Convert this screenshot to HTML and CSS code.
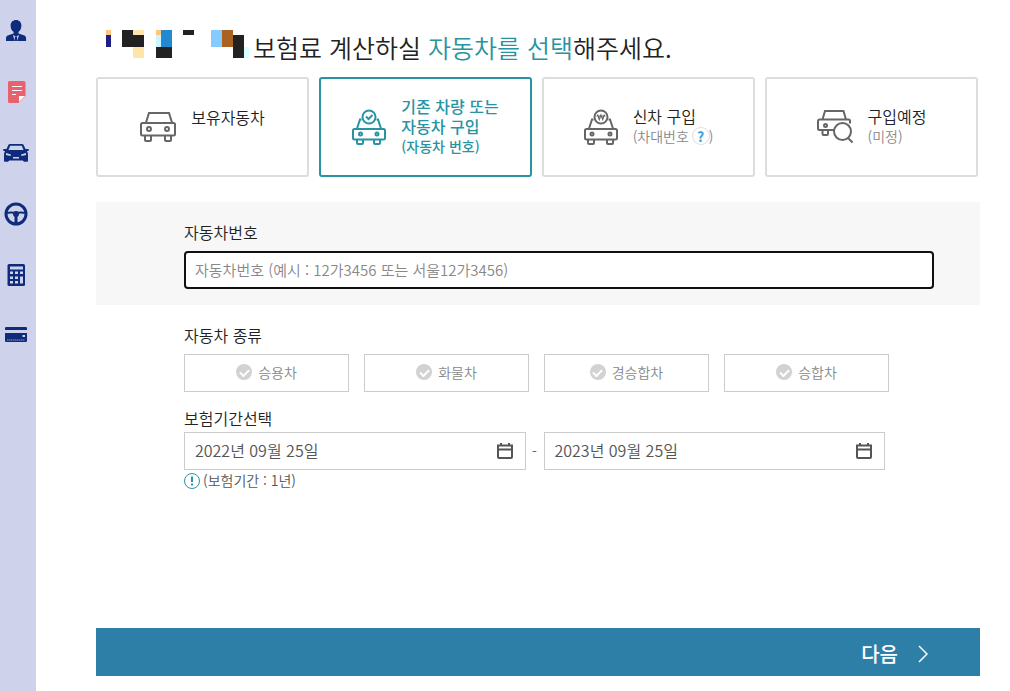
FILE: index.html
```html
<!DOCTYPE html>
<html lang="ko">
<head>
  <meta charset="UTF-8">
  <meta name="viewport" content="width=device-width, initial-scale=1">
  <title>보험료 계산</title>
  <link rel="stylesheet" href="styles.css">
</head>
<body>

  <nav class="sidebar">
    <a href="#" aria-label="가입자">
      <svg width="24" height="24" viewBox="0 0 24 24" fill="#0f2c7c">
        <path d="M12 1c3.300 0 5.400 2.300 5.400 5.600 0 3-1.200 5.200-2.900 6.400v1.500l6 2c1.100.5 1.600 1.500 1.600 3V22H2v-2.500c0-1.500.5-2.500 1.600-3l6-2V13C7.800 11.800 6.600 9.600 6.600 6.600 6.600 3.300 8.700 1 12 1z"/>
        <path d="M9 16l3 1.500 3-1.500-1.600 6h-2.800z" fill="#ced3eb"/>
        <path d="M11 17.500h2l.6 4.500h-3.200z"/>
      </svg>
    </a>
    <a href="#" aria-label="계약">
      <svg width="24" height="24" viewBox="0 0 24 24">
        <path d="M5.500 1h14.500a1.500 1.500 0 0 1 1.500 1.500V16l-7 7h-9A1.500 1.500 0 0 1 4 21.500v-19A1.500 1.500 0 0 1 5.500 1z" fill="#e7616f"/>
        <path d="M15 22v-6h6z" fill="#fff"/>
        <path d="M8 6.500h10M8 10.500h10M8 14.500h4" stroke="#fff" stroke-width="1.200"/>
      </svg>
    </a>
    <a href="#" aria-label="자동차">
      <svg width="26" height="24" viewBox="0 0 26 24">
        <path d="M7 3h12q1.200 0 1.800 1.300L22.500 8h3.200v1.800l-1.800.4c.8 1 1.100 2.200 1.100 3.800v6a.8.8 0 0 1-.8.800h-3.200l-1.200-1.300H6.200L5 20.800H1.800A.8.800 0 0 1 1 20v-6c0-1.600.3-2.800 1.100-3.800L.3 9.800V8h3.200l1.700-3.700Q5.800 3 7 3z" fill="#0f2c7c"/>
        <path d="M7.200 4.800h11.600L20.500 9h-15z" fill="#ced3eb"/>
        <path d="M3 12l5 1.500-.5 1.500L3 14zM23 12l-5 1.500.5 1.500 4.500-1zM10 16h6v1.500h-6z" fill="#ced3eb"/>
      </svg>
    </a>
    <a href="#" aria-label="운전자">
      <svg width="24" height="24" viewBox="0 0 24 24" fill="none" stroke="#0f2c7c">
        <circle cx="12" cy="12" r="10" stroke-width="3"/>
        <path d="M2 11q5-1 10 0 5-1 10 0" stroke-width="2"/>
        <path d="M12 13v9" stroke-width="3"/>
        <circle cx="12" cy="12" r="3" fill="#0f2c7c" stroke="none"/>
      </svg>
    </a>
    <a href="#" aria-label="계산기">
      <svg width="24" height="24" viewBox="0 0 24 24">
        <rect x="3.500" y="1" width="17.500" height="22" rx="1.500" fill="#0f2c7c"/>
        <path d="M6 3.500h13v3H6zM6 8.500h3v2.500H6zM11 8.500h3v2.500h-3zM16 8.500h3v2.500h-3zM6 13.500h3V16H6zM11 13.500h3V16h-3zM16 13.500h3v7h-3zM6 18h3v2.500H6zM11 18h3v2.500h-3z" fill="#ced3eb"/>
      </svg>
    </a>
    <a href="#" aria-label="결제">
      <svg width="24" height="24" viewBox="0 0 24 24">
        <path d="M2 3h20a1 1 0 0 1 1 1v2H1V4a1 1 0 0 1 1-1zM1 9h22v8a1 1 0 0 1-1 1H2a1 1 0 0 1-1-1z" fill="#0f2c7c"/>
        <path d="M18.500 11h2.500v2h-2.500z" fill="#ced3eb"/>
        <path d="M3 16h18" stroke="#8d99c4" stroke-width="1.200" stroke-dasharray="1.500 .5"/>
      </svg>
    </a>
  </nav>

  <main>
    <h1>
      <svg class="masked-name" width="144" height="28" viewBox="0 0 144 28" shape-rendering="crispEdges" aria-hidden="true">
        <path d="M0 0h5v5H0zM50 0h5v5h-5z" fill="#ffc680"/>
        <path d="M0 5h5v12H0z" fill="#1f1f85"/>
        <path d="M16 0h11v5h11v12H16zM50 17h16v11H50zM77 0h11v5H77zM127 5h11v23h-11z" fill="#222"/>
        <path d="M27 0h11v5H27zM27 17h11v11H27z" fill="#ffe6a8"/>
        <path d="M50 5h5v12h-5z" fill="#cdf5ff"/>
        <path d="M55 0h11v17H55z" fill="#2188d1"/>
        <path d="M105 0h11v17h-11z" fill="#86cbff"/>
        <path d="M116 0h11v17h-11z" fill="#a96222"/>
        <path d="M138 17h5v11h-5z" fill="#d7ffff"/>
      </svg>
      <span>보험료 계산하실 <em>자동차를 선택</em>해주세요.</span>
    </h1>

    <div class="cards">
      <button type="button" class="card">
        <svg width="36" height="36" viewBox="0 0 36 36">
          <path d="M6 13.500L9 4h20l3 9.500M5 27v4a1 1 0 0 0 1 1h4a1 1 0 0 0 1-1v-4M25 27v4a1 1 0 0 0 1 1h4a1 1 0 0 0 1-1v-4"/>
          <rect x="1" y="14" width="34" height="12.500" rx="1.500"/>
          <circle cx="9" cy="20" r="2"/>
          <circle cx="27" cy="20" r="2"/>
        </svg>
        <span class="card-text">보유자동차</span>
      </button>

      <button type="button" class="card selected">
        <svg width="34" height="36" viewBox="0 0 34 36">
          <path d="M5 19.500l3-9h1.500M29 19.500l-3-9h-1.500M5 31v3a1 1 0 0 0 1 1h4a1 1 0 0 0 1-1v-3M22 31v3a1 1 0 0 0 1 1h4a1 1 0 0 0 1-1v-3"/>
          <rect x="1" y="20" width="32" height="10.500" rx="1.500"/>
          <circle cx="8.500" cy="25" r="1.500"/>
          <circle cx="25" cy="25" r="1.500"/>
          <circle cx="17" cy="8" r="6.500"/>
          <path d="M14 7.500l2.500 2.500L20.500 6"/>
        </svg>
        <span class="card-text">기존 차량 또는<br>자동차 구입<small>(자동차 번호)</small></span>
      </button>

      <button type="button" class="card">
        <svg width="34" height="36" viewBox="0 0 34 36">
          <path d="M5 19.500l3-9h1.500M29 19.500l-3-9h-1.500M4 31v3a1 1 0 0 0 1 1h4a1 1 0 0 0 1-1v-3M23 31v3a1 1 0 0 0 1 1h4a1 1 0 0 0 1-1v-3"/>
          <rect x="1" y="20" width="32" height="10.500" rx="1.500"/>
          <circle cx="8" cy="25" r="1.500"/>
          <circle cx="26" cy="25" r="1.500"/>
          <circle cx="17" cy="8" r="6.500"/>
          <path d="M13.500 5.500l1.800 5L17 6l1.700 4.500 1.800-5M12.500 7h9" stroke-width="1.200"/>
        </svg>
        <span class="card-text">신차 구입<small>(차대번호 <span class="help">?</span>)</small></span>
      </button>

      <button type="button" class="card">
        <svg width="36" height="36" viewBox="0 0 36 36">
          <path d="M5.500 10.500L8 2h18.500l2.500 8.500M17 21H2.500A1.500 1.500 0 0 1 1 19.500V12a1.500 1.500 0 0 1 1.500-1.500h29A1.500 1.500 0 0 1 33 12v2.500M5.500 21.500V25a1 1 0 0 0 1 1H10a1 1 0 0 0 1-1v-3.500M31.500 29.500l4 4"/>
          <circle cx="8.500" cy="16.500" r="1.500"/>
          <circle cx="25.500" cy="22.500" r="8.500"/>
        </svg>
        <span class="card-text">구입예정<small>(미정)</small></span>
      </button>
    </div>

    <form id="carForm">
      <div class="number-panel">
        <label for="carNumber">자동차번호</label>
        <input type="text" id="carNumber" placeholder="자동차번호 (예시 : 12가3456 또는 서울12가3456)">
      </div>

      <fieldset class="car-types">
        <legend>자동차 종류</legend>
        <div class="type-list">
          <label class="type"><input type="radio" name="carType" value="passenger"><i class="tick"></i><span>승용차</span></label>
          <label class="type"><input type="radio" name="carType" value="truck"><i class="tick"></i><span>화물차</span></label>
          <label class="type"><input type="radio" name="carType" value="minivan"><i class="tick"></i><span>경승합차</span></label>
          <label class="type"><input type="radio" name="carType" value="van"><i class="tick"></i><span>승합차</span></label>
        </div>
      </fieldset>

      <div class="period">
        <label for="startDate">보험기간선택</label>
        <div class="dates">
          <div class="date">
            <input type="text" id="startDate" value="2022년 09월 25일">
            <svg width="16" height="16" viewBox="0 0 16 16"><path d="M1 2.500h14V14a1 1 0 0 1-1 1H2a1 1 0 0 1-1-1zM1 6.500h14M4 0v3M12 0v3"/></svg>
          </div>
          <span>-</span>
          <div class="date">
            <input type="text" id="endDate" aria-label="보험 종료일" value="2023년 09월 25일">
            <svg width="16" height="16" viewBox="0 0 16 16"><path d="M1 2.500h14V14a1 1 0 0 1-1 1H2a1 1 0 0 1-1-1zM1 6.500h14M4 0v3M12 0v3"/></svg>
          </div>
        </div>
        <p class="note">
          <svg width="16" height="16" viewBox="0 0 16 16" fill="none" stroke="#2793a3"><circle cx="8" cy="8" r="7.500"/><path d="M8 3.500v5.500M8 10.500v2" stroke-width="2"/></svg>
          <span>(보험기간 : 1년)</span>
        </p>
      </div>
    </form>

    <button type="submit" form="carForm" class="next">
      <span>다음</span>
      <svg width="10" height="18" viewBox="0 0 10 18" fill="none" stroke="#fff" stroke-width="1.500"><path d="M1 1l8 8-8 8"/></svg>
    </button>
  </main>

</body>
</html>
```
FILE: styles.css
```css
* {
  box-sizing: border-box;
}
body {
  margin: 0;
  display: flex;
  min-height: 100vh;
  background: #fff;
  color: #222;
  font-family: "Noto Sans CJK KR", sans-serif;
  font-size: 16px;
  font-weight: 350;
}
button, input {
  font: inherit;
}
svg {
  flex: none;
}
.sidebar {
  width: 36px;
  flex: none;
  padding: 19px 4px 0 4px;
  background: #ced3eb;
  display: flex;
  flex-direction: column;
  gap: 37px;
}
.sidebar a {
  display: flex;
  justify-content: center;
  width: 24px;
  height: 24px;
}
main {
  flex: 1;
  min-width: 0;
  padding: 30px 30px 15px 60px;
  display: flex;
  flex-direction: column;
}
h1 {
  display: flex;
  gap: 3px;
  height: 47px;
  margin: 0;
  padding-left: 10px;
  color: #222;
  font-size: 25px;
  font-weight: 350;
  line-height: 34px;
}
h1 em {
  color: #2793a3;
  font-style: normal;
}
.cards {
  display: grid;
  grid-template-columns: repeat(4, 1fr);
  gap: 10px;
  padding-right: 2px;
}
.card {
  display: flex;
  align-items: center;
  justify-content: center;
  gap: 15px;
  height: 100px;
  padding: 0;
  border: 2px solid #ddd;
  border-radius: 3px;
  background: #fff;
  color: #222;
  line-height: 20px;
  text-align: left;
  cursor: pointer;
}
.card svg {
  fill: none;
  stroke: #666;
  stroke-width: 2;
}
.card-text {
  min-height: 40px;
  padding-bottom: 2px;
}
.card small {
  display: block;
  color: #888;
  font-size: 14px;
}
.card.selected {
  border-color: #2793a3;
  color: #2793a3;
  font-weight: 500;
}
.card.selected svg {
  stroke: #2793a3;
}
.card.selected small {
  color: #2793a3;
}
.help {
  display: inline-block;
  width: 16px;
  height: 16px;
  border-radius: 50%;
  box-shadow: 0 0 0 1px #ddd;
  color: #3ba0dc;
  font-weight: 700;
  line-height: 16px;
  text-align: center;
}
.number-panel {
  margin-top: 25px;
  padding: 18px 46px 16px 88px;
  background: #f7f7f7;
}
.number-panel label, .period label {
  display: block;
  line-height: 24px;
}
.number-panel input {
  display: block;
  width: 100%;
  height: 38px;
  margin-top: 7px;
  padding: 0 9px 2px 9px;
  border: 2px solid #101010;
  border-radius: 4px;
  background: #fff;
  font-size: 15px;
  outline: none;
}
.number-panel input::placeholder {
  color: #888;
  opacity: 1;
}
.car-types {
  margin: 0;
  padding: 18px 91px 0 88px;
  border: 0;
}
.car-types legend {
  float: left;
  width: 100%;
  padding: 0;
  line-height: 24px;
}
.type-list {
  clear: both;
  display: grid;
  grid-template-columns: repeat(4, 1fr);
  gap: 15px;
  padding-top: 7px;
}
.type {
  position: relative;
  display: flex;
  align-items: center;
  justify-content: center;
  gap: 6px;
  height: 38px;
  padding-bottom: 2px;
  border: 1px solid #ccc;
  color: #888;
  font-size: 14px;
  cursor: pointer;
}
.type input {
  position: absolute;
  opacity: 0;
}
.tick {
  display: flex;
  justify-content: center;
  width: 16px;
  height: 16px;
  padding-top: 5px;
  border-radius: 50%;
  background: #d2d2d2;
}
.tick::before {
  content: "";
  width: 7px;
  height: 4px;
  border: solid #fff;
  border-width: 0 0 2px 2px;
  transform: rotate(-45deg);
}
.type input:checked + .tick {
  background: #2793a3;
}
.period {
  padding: 14px 95px 0 88px;
}
.period label {
  padding-bottom: 2px;
}
.dates {
  display: flex;
  align-items: center;
  color: #555;
}
.dates span {
  width: 18px;
  font-size: 14px;
  text-align: center;
}
.date {
  flex: 1;
  min-width: 0;
  height: 38px;
  padding: 0 12px 0 10px;
  border: 1px solid #ccc;
  display: flex;
  align-items: center;
}
.date input {
  flex: 1;
  min-width: 0;
  padding: 0 0 2px 0;
  border: 0;
  background: none;
  color: #555;
  outline: none;
}
.date svg {
  fill: none;
  stroke: #555;
  stroke-width: 2;
}
.note {
  display: flex;
  align-items: center;
  gap: 3px;
  margin: 0;
  color: #555;
  font-size: 14px;
  line-height: 20px;
}
.note span {
  padding-bottom: 2px;
}
.next {
  display: flex;
  align-items: center;
  justify-content: flex-end;
  gap: 20px;
  height: 48px;
  margin-top: auto;
  padding: 3px 52px 0 52px;
  border: 0;
  background: #2d7fa8;
  color: #fff;
  font-size: 20px;
  font-weight: 500;
  cursor: pointer;
}
```
